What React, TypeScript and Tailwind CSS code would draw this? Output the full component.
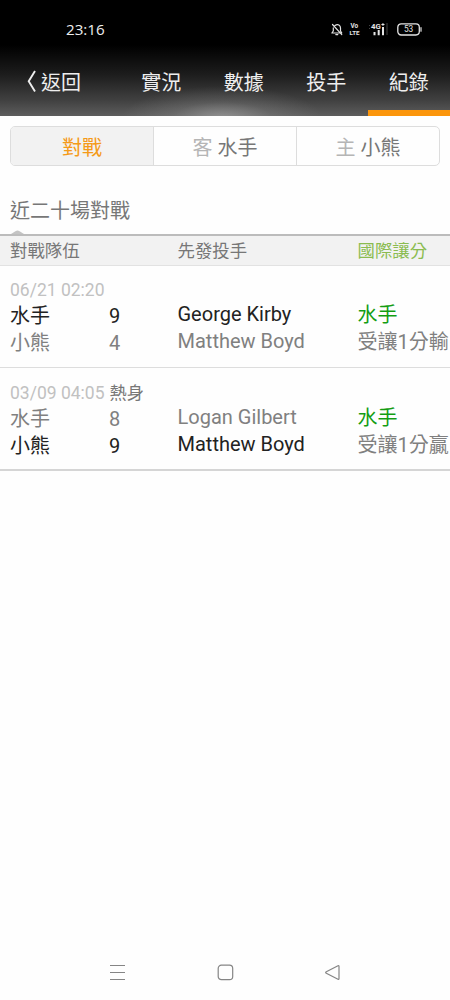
import React from 'react';

const tabs = ['實況', '數據', '投手', '紀錄'];

const games = [
  {
    date: '06/21 02:20', note: '',
    rows: [
      { team: '水手', score: 9, pitcher: 'George Kirby', won: true },
      { team: '小熊', score: 4, pitcher: 'Matthew Boyd', won: false },
    ],
    pick: '水手', result: '受讓1分輸',
  },
  {
    date: '03/09 04:05', note: '熱身',
    rows: [
      { team: '水手', score: 8, pitcher: 'Logan Gilbert', won: false },
      { team: '小熊', score: 9, pitcher: 'Matthew Boyd', won: true },
    ],
    pick: '水手', result: '受讓1分贏',
  },
];

function StatusIcons() {
  return (
    <div className="flex items-center text-[#e4e4e4]">
      <svg className="mr-[6px]" width="12" height="13" viewBox="0 0 12 13" fill="none" stroke="currentColor" strokeWidth="1.2" strokeLinecap="round" strokeLinejoin="round">
        <path d="M4 2.4C7 0.3 9.5 2.4 9.5 5V8L10.7 9.9M2.3 4.8V8L0.9 10H8.9M4.8 11.6H6.8M1.5 1.5L10.8 11.6" />
      </svg>
      <svg className="mr-[8px]" width="12" height="20" viewBox="0 0 12 20" fill="currentColor" fontFamily="Roboto, sans-serif" fontWeight="700">
        <text x="1.5" y="8.7" fontSize="6.4">Vo</text>
        <text x=".6" y="16.4" fontSize="6.2">LTE</text>
      </svg>
      <svg className="mr-[9px]" width="19" height="14" viewBox="0 0 19 14" fill="currentColor">
        <path d="M0 3h1v1H0zM0 6h1v1H0z" opacity=".3" />
        <text x="2" y="6.6" fontFamily="Roboto, sans-serif" fontSize="7.8" fontWeight="700">4G</text>
        <path d="M12.4 2h1.1V.9h.9V2h1.1v.9h-1.1V4h-.9V2.9h-1.1zM4.5 10h2v3.3h-2zM8.7 8h2v5.3h-2zM13 5h2v8.3h-2z" />
        <path d="M17.5 1h1v12h-1z" opacity=".3" />
      </svg>
      <svg width="26" height="13" viewBox="0 0 26 13" fill="none" stroke="currentColor">
        <rect x=".8" y=".8" width="21.5" height="11.2" rx="3.4" strokeWidth="1.3" />
        <path d="M24 4.7v3.5" strokeWidth="1.2" strokeLinecap="round" />
        <text x="11.6" y="9.3" textAnchor="middle" fontFamily="Roboto, sans-serif" fontSize="8.3" fill="currentColor" stroke="none">53</text>
      </svg>
    </div>
  );
}

export default function App() {
  return (
    <div className="flex h-[1000px] w-[450px] flex-col overflow-hidden bg-[#fefefe] font-['Roboto','Noto_Sans_CJK_TC',sans-serif] text-[20px] text-[#777]">
      <header className="h-[116px] shrink-0 bg-[radial-gradient(ellipse_100px_32px_at_222px_118px,rgba(180,180,180,0.6),rgba(180,180,180,0.18)_50%,transparent),linear-gradient(to_bottom,#000_0px,#000_45px,#1d1d1d_75px,#404040_100px,#5d5d5d_116px)] text-[#eee]">
        <div className="flex h-[58px] items-center justify-between pr-[27px] pl-[66px]">
          <span className="font-['Open_Sans',sans-serif] text-[15.2px]">23:16</span>
          <StatusIcons />
        </div>
        <nav className="flex h-[58px]">
          <button className="flex w-[120px] items-start pt-[11px] pl-[27px] leading-[28px]">
            <svg className="mt-[1px] mr-[5px]" width="9" height="23" viewBox="0 0 9 23" fill="none" stroke="currentColor" strokeWidth="1.9">
              <path d="M8 1L1.7 11.3L8 21.6" />
            </svg>
            返回
          </button>
          <div className="flex flex-1">
            {tabs.map((tab) => (
              <button key={tab} className={`flex-1 text-center leading-[28px] ${tab === '紀錄' ? 'border-b-[6px] border-[#fb950b] pb-[2px]' : 'pb-[8px]'}`}>{tab}</button>
            ))}
          </div>
        </nav>
      </header>

      <div className="mx-[10px] mt-[10px] flex h-[40px] shrink-0 overflow-hidden rounded-[5px] border border-[#ddd] leading-[42px]">
        <div className="w-[143px] border-r border-[#ddd] bg-[#f2f2f2] text-center text-[#f59a18]">對戰</div>
        <div className="w-[143px] border-r border-[#ddd] text-center"><span className="text-[#b5b5b5]">客</span> 水手</div>
        <div className="flex-1 text-center"><span className="text-[#b5b5b5]">主</span> 小熊</div>
      </div>

      <h1 className="mt-[29px] h-[35px] shrink-0 pl-[10px] text-[20px] leading-[33px]">近二十場對戰</h1>
      <svg className="ml-[11px] shrink-0" width="13" height="4" viewBox="0 0 13 4"><path d="M0 4L4.8 1Q6.5 0 8.2 1L13 4Z" fill="#c4c4c4" /></svg>
      <div className="flex h-[32px] shrink-0 border-t-2 border-b border-t-[#bcbcbc] border-b-[#e2e2e2] bg-[#f2f2f2] pl-[10px] text-[17.4px] leading-[31px]">
        <div className="w-[167.5px]">對戰隊伍</div>
        <div className="w-[180px]">先發投手</div>
        <div className="text-[#8bbc50]">國際讓分</div>
      </div>

      {games.map((game) => (
        <section key={game.date} className="h-[102px] shrink-0 border-b border-[#ddd] pt-[12px] pl-[10px] last-of-type:h-[103px] last-of-type:border-b-2 last-of-type:border-[#d5d5d5] last-of-type:pt-[13px]">
          <div className="h-[25px] text-[17.5px] leading-[25px] text-[#c1c1c1]">
            {game.date}{game.note && <span className="ml-[5px] text-[17.2px] text-[#777]">{game.note}</span>}
          </div>
          <div className="flex leading-[27px]">
            <div className="w-[99px]">
              {game.rows.map((row) => <div key={row.team} className={row.won ? 'text-[#222]' : 'text-[#808080]'}>{row.team}</div>)}
            </div>
            <div className="w-[68.5px]">
              {game.rows.map((row) => <div key={row.team} className={row.won ? 'text-[#222]' : 'text-[#808080]'}>{row.score}</div>)}
            </div>
            <div className="-mt-[2px] w-[180px]">
              {game.rows.map((row) => <div key={row.team} className={row.won ? 'text-[#222]' : 'text-[#808080]'}>{row.pitcher}</div>)}
            </div>
            <div className="-mt-[1px] whitespace-nowrap text-[#808080]">
              <div className="text-[#139d13]">{game.pick}</div>
              <div>{game.result}</div>
            </div>
          </div>
        </section>
      ))}

      <footer className="mt-auto flex h-[56px] shrink-0 items-center justify-between px-[109px] text-[#858585]">
        <svg width="17" height="17" viewBox="0 0 17 17" fill="none" stroke="currentColor" strokeWidth="1.2"><path d="M1 1.5h15M1 8.5h15M1 15.5h15" /></svg>
        <svg width="17" height="17" viewBox="0 0 17 17" fill="none" stroke="currentColor" strokeWidth="1.2"><rect x="1.2" y="1.2" width="14.5" height="14.5" rx="3.2" /></svg>
        <svg width="17" height="17" viewBox="0 0 17 17" fill="none" stroke="currentColor" strokeWidth="1.2" strokeLinejoin="round"><path d="M14 1.7L2.3 7.8Q1 8.5 2.3 9.2L14 15.3Q15 15.7 15 14.5V2.5Q15 1.3 14 1.7Z" /></svg>
      </footer>
    </div>
  );
}
